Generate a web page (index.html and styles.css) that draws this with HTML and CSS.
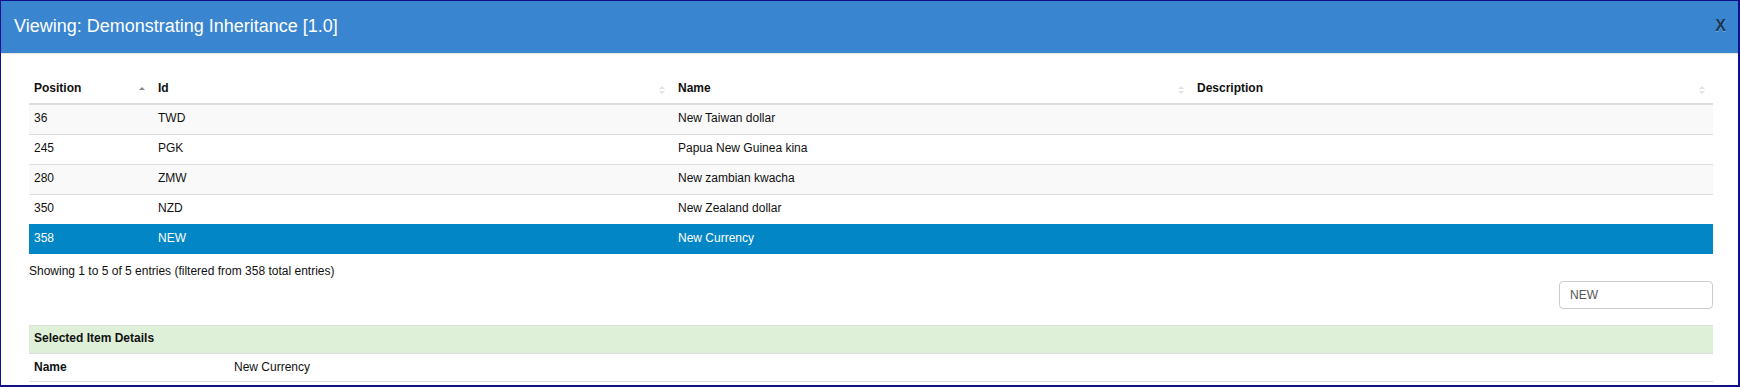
FILE: index.html
```html
<!DOCTYPE html>
<html>
<head>
  <title>Viewing: Demonstrating Inheritance [1.0]</title>
  <link rel="stylesheet" href="styles.css">
</head>
<body>
  <div class="modal">
    <div class="modal-header">
      <h4 class="modal-title">Viewing: Demonstrating Inheritance [1.0]</h4>
      <button class="close">X</button>
    </div>

    <div class="modal-body">
      <table class="data-table">
        <colgroup>
          <col class="col-position">
          <col class="col-id">
          <col class="col-name">
          <col>
        </colgroup>
        <thead>
          <tr>
            <th class="sorting-asc">Position</th>
            <th class="sorting">Id</th>
            <th class="sorting">Name</th>
            <th class="sorting">Description</th>
          </tr>
        </thead>
        <tbody>
          <tr class="odd">
            <td>36</td>
            <td>TWD</td>
            <td>New Taiwan dollar</td>
            <td></td>
          </tr>
          <tr>
            <td>245</td>
            <td>PGK</td>
            <td>Papua New Guinea kina</td>
            <td></td>
          </tr>
          <tr class="odd">
            <td>280</td>
            <td>ZMW</td>
            <td>New zambian kwacha</td>
            <td></td>
          </tr>
          <tr>
            <td>350</td>
            <td>NZD</td>
            <td>New Zealand dollar</td>
            <td></td>
          </tr>
          <tr class="selected">
            <td>358</td>
            <td>NEW</td>
            <td>New Currency</td>
            <td></td>
          </tr>
        </tbody>
      </table>

      <div class="table-info">Showing 1 to 5 of 5 entries (filtered from 358 total entries)</div>

      <div class="table-filter">
        <input type="search" value="NEW">
      </div>

      <table class="details-table">
        <colgroup>
          <col class="col-label">
          <col>
        </colgroup>
        <thead>
          <tr>
            <th colspan="2">Selected Item Details</th>
          </tr>
        </thead>
        <tbody>
          <tr>
            <th>Name</th>
            <td>New Currency</td>
          </tr>
        </tbody>
      </table>
    </div>
  </div>
</body>
</html>
```

FILE: styles.css
```css
body {
  margin: 0;
  font-family: "Liberation Sans", Arial, sans-serif;
  font-size: 12px;
  color: #333;
}
.modal {
  height: 387px;
  box-sizing: border-box;
  border: 1px solid #10108a;
  border-right-width: 2px;
  border-bottom-width: 2px;
  background: #fff;
  overflow: hidden;
}
.modal-header {
  height: 53px;
  box-sizing: border-box;
  background: #3985d0;
  border-bottom: 1px solid #e5e5e5;
  display: flex;
  align-items: center;
  justify-content: space-between;
  padding: 0 12px 2px 13px;
}
.modal-title {
  margin: 0;
  font-size: 18px;
  font-weight: normal;
  color: #fff;
}
.close {
  background: none;
  border: none;
  padding: 0;
  font-family: "Liberation Sans", Arial, sans-serif;
  font-size: 16px;
  font-weight: bold;
  color: #1b3557;
  text-shadow: 0 1px 0 rgba(255,255,255,0.3);
  cursor: pointer;
}
.modal-body {
  padding: 18px 25px 0 28px;
}
table {
  width: 100%;
  border-collapse: separate;
  border-spacing: 0;
  table-layout: fixed;
}
.col-position {
  width: 124px;
}
.col-id {
  width: 520px;
}
.col-name {
  width: 519px;
}
.col-label {
  width: 200px;
}
.data-table th {
  position: relative;
  text-align: left;
  font-weight: bold;
  color: #111;
  padding: 9px 5px 7px;
  line-height: 15px;
  border-bottom: 1px solid #ddd;
}
.data-table td {
  padding: 6px 5px 8px;
  line-height: 15px;
  border-top: 1px solid #ddd;
  color: #111;
  white-space: nowrap;
}
.data-table tr.odd td {
  background: #f9f9f9;
}
.data-table tr.selected td {
  background: #0286c6;
  border-top-color: #0286c6;
  color: #fff;
}

/* sort arrows */
.data-table th.sorting::before,
.data-table th.sorting::after,
.data-table th.sorting-asc::before {
  content: "";
  position: absolute;
  right: 8px;
  border-left: 3px solid transparent;
  border-right: 3px solid transparent;
}
.data-table th.sorting::before {
  top: 14px;
  border-bottom: 3px solid #e4e4e4;
}
.data-table th.sorting::after {
  top: 19px;
  border-top: 3px solid #e4e4e4;
}
.data-table th.sorting-asc::before {
  top: 15px;
  border-bottom: 3px solid #888;
}

.table-info {
  padding-top: 10px;
  line-height: 15px;
  color: #111;
}
.table-filter {
  display: flex;
  justify-content: flex-end;
  margin-top: 2px;
}
.table-filter input {
  width: 154px;
  height: 28px;
  box-sizing: border-box;
  border: 1px solid #ccc;
  border-radius: 4px;
  padding: 0 10px;
  font-family: "Liberation Sans", Arial, sans-serif;
  font-size: 12px;
  color: #555;
  outline: none;
}
.details-table {
  margin-top: 16px;
}
.details-table th,
.details-table td {
  text-align: left;
  padding: 6px 5px;
  line-height: 15px;
  border-top: 1px solid #ddd;
  color: #111;
}
.details-table thead th {
  padding: 5px 5px 7px;
  background: #dff0d8;
}
.details-table tbody tr:last-child th,
.details-table tbody tr:last-child td {
  border-bottom: 1px solid #ddd;
}
```
